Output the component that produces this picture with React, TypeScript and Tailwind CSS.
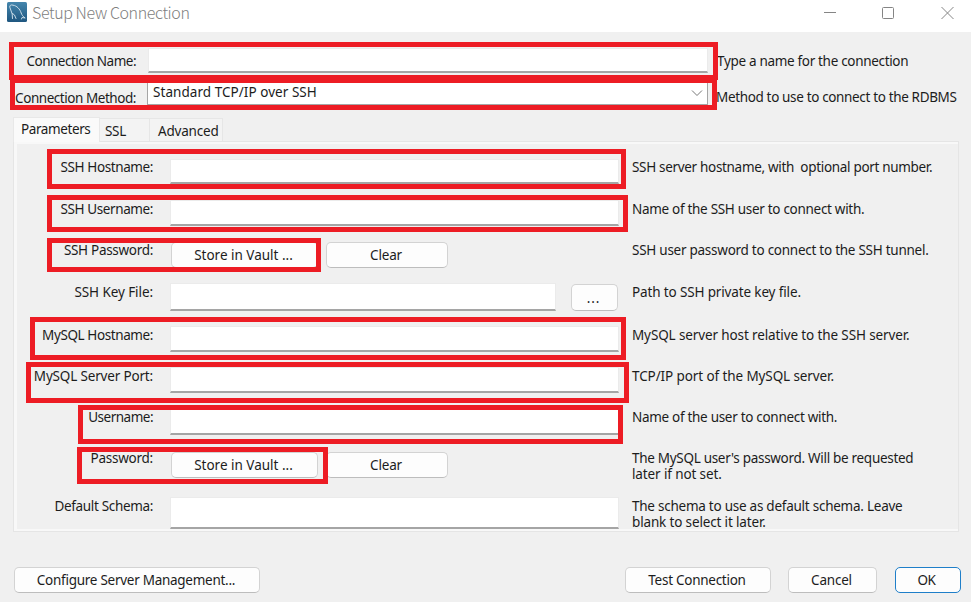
import type { ReactNode } from "react";

function Button({ className, children }: { className: string; children: ReactNode }) {
  return (
    <button
      className={`flex shrink-0 items-center justify-center rounded-[5px] border border-[#d3d3d3] border-b-[#bdbdbd] bg-[#fdfdfd] pt-px pr-0.5 whitespace-nowrap ${className}`}
    >
      {children}
    </button>
  );
}

function Field({ className }: { className: string }) {
  return (
    <input
      type="text"
      className={`block shrink-0 border border-[#ebebeb] border-b-2 border-b-[#a5a5a5] bg-white outline-none ${className}`}
    />
  );
}

type RowProps = {
  label: string;
  height: string;
  labelTracking: string;
  help: string[];
  helpTracking: string;
  lastLineTracking?: string;
  children: ReactNode;
};

function Row({ label, height, labelTracking, help, helpTracking, lastLineTracking = "", children }: RowProps) {
  return (
    <div className={`flex shrink-0 ${height}`}>
      <div className={`mr-[17px] w-[139px] shrink-0 text-right leading-5 whitespace-nowrap ${labelTracking}`}>
        {label}
      </div>
      <div className="flex w-[462px] shrink-0 items-start">{children}</div>
      <div className="pt-0.5 leading-4 whitespace-pre">
        {help.map((line, i) => (
          <div key={line} className={i === 0 ? helpTracking : lastLineTracking}>
            {line}
          </div>
        ))}
      </div>
    </div>
  );
}

function Highlight({ className }: { className: string }) {
  return <div className={`pointer-events-none absolute border-5 border-[#ed1c24] ${className}`} />;
}

export default function App() {
  return (
    <div className="relative flex h-[602px] w-[971px] flex-col overflow-hidden bg-[#f0f0f0] font-['Noto_Sans','Open_Sans',sans-serif] text-[13.5px] text-[#1c1c1c]">
      <header className="flex h-8 shrink-0 items-start bg-white pt-0.5 pl-[7px]">
        <svg className="h-5 w-5 shrink-0" viewBox="0 0 20 20" fill="none">
          <defs>
            <linearGradient id="dolphin" x1="0" y1="0" x2="0" y2="1">
              <stop offset="0" stopColor="#4586ad" />
              <stop offset="1" stopColor="#1f5780" />
            </linearGradient>
          </defs>
          <rect width="20" height="20" rx="1.5" fill="url(#dolphin)" />
          <path
            d="M5.500 16.500 5.200 12 2.800 5.200C2.500 3.200 4 2.500 6 3.200c4 .6 6.800 3.800 8.200 7.800.6 2 1.800 3.500 4 5l-3.200-.5-.5 1.500M5.500 11.500l2 1.500 1.500 3.500"
            stroke="#c9dce8"
            strokeWidth="1"
            strokeLinecap="round"
            strokeLinejoin="round"
          />
        </svg>
        <h1 className="-mt-px ml-[5px] grow font-['Noto_Sans_CJK_KR',sans-serif] text-base leading-[22px] font-light tracking-[-0.4px] text-[#808080]">
          Setup New Connection
        </h1>
        <svg className="mt-[5px] mr-[17px] h-3.5 w-[131px] shrink-0" viewBox="0 0 131 14" fill="none" stroke="#858585">
          <path d="M1 5.500h12" />
          <rect x="59.500" y="0.500" width="11" height="11" rx="1" />
          <path d="m118.500 0 12 12m0-12-12 12" />
        </svg>
      </header>

      <div className="flex h-[50px] shrink-0 pt-4">
        <label className="mt-[3px] mr-3 w-[136px] text-right leading-5 tracking-[-0.5px]">Connection Name:</label>
        <Field className="h-[25px] w-[560px]" />
        <span className="mt-[3px] ml-[9px] leading-5 tracking-[-0.32px]">Type a name for the connection</span>
      </div>
      <div className="flex h-[35px] shrink-0">
        <label className="mt-1.5 mr-[11px] w-[136px] text-right leading-5 tracking-[-0.45px] whitespace-nowrap">
          Connection Method:
        </label>
        <div className="flex h-[23px] w-[561px] items-center justify-between border border-[#a5a5a5] bg-white pr-1 pb-0.5 pl-[5px]">
          <span className="tracking-[0.05px]">Standard TCP/IP over SSH</span>
          <svg className="h-2 w-3" viewBox="0 0 12 8" fill="none" stroke="#777">
            <path d="m1 1.500 5 5 5-5" />
          </svg>
        </div>
        <span className="mt-[5px] ml-2 leading-5 tracking-[-0.35px] whitespace-nowrap">
          Method to use to connect to the RDBMS
        </span>
      </div>

      <nav className="ml-[13px] flex h-6 shrink-0 items-end">
        <div className="z-10 -mb-px h-[25px] w-[87px] border border-[#e8e8e8] border-b-0 bg-[#fafafa] pl-[7px] leading-[22px] tracking-[-0.4px]">
          Parameters
        </div>
        <div className="h-[23px] w-[50px] border-t border-r border-[#e6e6e6] bg-[#f3f3f3] pl-[5px] leading-6 tracking-[-0.3px]">
          SSL
        </div>
        <div className="h-[23px] w-[73px] border-t border-r border-[#e6e6e6] bg-[#f3f3f3] pl-2 leading-6 tracking-[-0.2px]">
          Advanced
        </div>
      </nav>

      <main className="ml-[13px] flex h-[391px] w-[946px] shrink-0 flex-col border border-[#e5e5e5] pt-[15px] shadow-[inset_3px_2px_0_#f8f8f8,inset_0_-2px_0_#f8f8f8]">
        <Row
          label="SSH Hostname:"
          labelTracking="tracking-[-0.4px]"
          height="h-[42px]"
          help={["SSH server hostname, with  optional port number."]}
          helpTracking="tracking-[-0.32px]"
        >
          <Field className="mt-0.5 h-[25px] w-[449px]" />
        </Row>
        <Row
          label="SSH Username:"
          labelTracking="tracking-[-0.4px]"
          height="h-[41px]"
          help={["Name of the SSH user to connect with."]}
          helpTracking="tracking-[-0.3px]"
        >
          <Field className="mt-px h-[26px] w-[449px]" />
        </Row>
        <Row
          label="SSH Password:"
          labelTracking="tracking-[-0.3px]"
          height="h-[42px]"
          help={["SSH user password to connect to the SSH tunnel."]}
          helpTracking="tracking-[-0.26px]"
        >
          <Button className="mt-0.5 ml-px h-[26px] w-[147px]">Store in Vault ...</Button>
          <Button className="mt-0.5 ml-2 h-[26px] w-[122px] tracking-[-0.2px]">Clear</Button>
        </Row>
        <Row
          label="SSH Key File:"
          labelTracking="tracking-[-0.08px]"
          height="h-[43px]"
          help={["Path to SSH private key file."]}
          helpTracking="tracking-[-0.14px]"
        >
          <Field className="mt-px h-7 w-[386px]" />
          <Button className="mt-0.5 ml-[15px] h-[27px] w-[47px] tracking-[0.8px]">...</Button>
        </Row>
        <Row
          label="MySQL Hostname:"
          labelTracking="tracking-[-0.4px]"
          height="h-[41px]"
          help={["MySQL server host relative to the SSH server."]}
          helpTracking="tracking-[-0.12px]"
        >
          <Field className="mt-px h-[26px] w-[449px]" />
        </Row>
        <Row
          label="MySQL Server Port:"
          labelTracking="tracking-[-0.17px]"
          height="h-[41px]"
          help={["TCP/IP port of the MySQL server."]}
          helpTracking="tracking-[-0.1px]"
        >
          <Field className="mt-px h-[26px] w-[449px]" />
        </Row>
        <Row
          label="Username:"
          labelTracking="tracking-[-0.5px]"
          height="h-[41px]"
          help={["Name of the user to connect with."]}
          helpTracking="tracking-[-0.3px]"
        >
          <Field className="mt-0.5 h-[26px] w-[449px]" />
        </Row>
        <Row
          label="Password:"
          labelTracking="tracking-[-0.25px]"
          height="h-[48px]"
          help={["The MySQL user's password. Will be requested", "later if not set."]}
          helpTracking="tracking-[-0.3px]"
          lastLineTracking="tracking-[-0.12px]"
        >
          <Button className="mt-1 ml-px h-[26px] w-[147px]">Store in Vault ...</Button>
          <Button className="mt-1 ml-2 h-[26px] w-[122px] tracking-[-0.2px]">Clear</Button>
        </Row>
        <Row
          label="Default Schema:"
          labelTracking="tracking-[-0.33px]"
          height="h-[34px]"
          help={["The schema to use as default schema. Leave", "blank to select it later."]}
          helpTracking="tracking-[-0.25px]"
          lastLineTracking="tracking-[-0.15px]"
        >
          <Field className="mt-px h-8 w-[449px]" />
        </Row>
      </main>

      <footer className="mt-[35px] ml-3.5 flex w-[947px] shrink-0">
        <Button className="h-[26px] w-[246px] tracking-[-0.27px]">Configure Server Management...</Button>
        <Button className="ml-auto h-[26px] w-[146px] tracking-[-0.27px]">Test Connection</Button>
        <Button className="ml-[17px] h-[26px] w-[89px] tracking-[-0.2px]">Cancel</Button>
        <button className="ml-[18px] h-[26px] w-[66px] rounded-[5px] border border-[#1f7fc9] bg-[#fdfdfd] pt-px pr-[3px] tracking-[-0.5px]">
          OK
        </button>
      </footer>

      <Highlight className="top-[42px] left-[9px] h-[38px] w-[709px]" />
      <Highlight className="top-[78px] left-[10px] h-8 w-[707px]" />
      <Highlight className="top-[149px] left-[47px] h-10 w-[579px]" />
      <Highlight className="top-[195px] left-[47px] h-[37px] w-[581px]" />
      <Highlight className="top-[238px] left-[47px] h-[34px] w-[274px]" />
      <Highlight className="top-[317px] left-[30px] h-[43px] w-[596px]" />
      <Highlight className="top-[362px] left-[26px] h-[41px] w-[603px]" />
      <Highlight className="top-[405px] left-[78px] h-[39px] w-[545px]" />
      <Highlight className="top-[447px] left-[77px] h-[37px] w-[251px]" />
    </div>
  );
}
